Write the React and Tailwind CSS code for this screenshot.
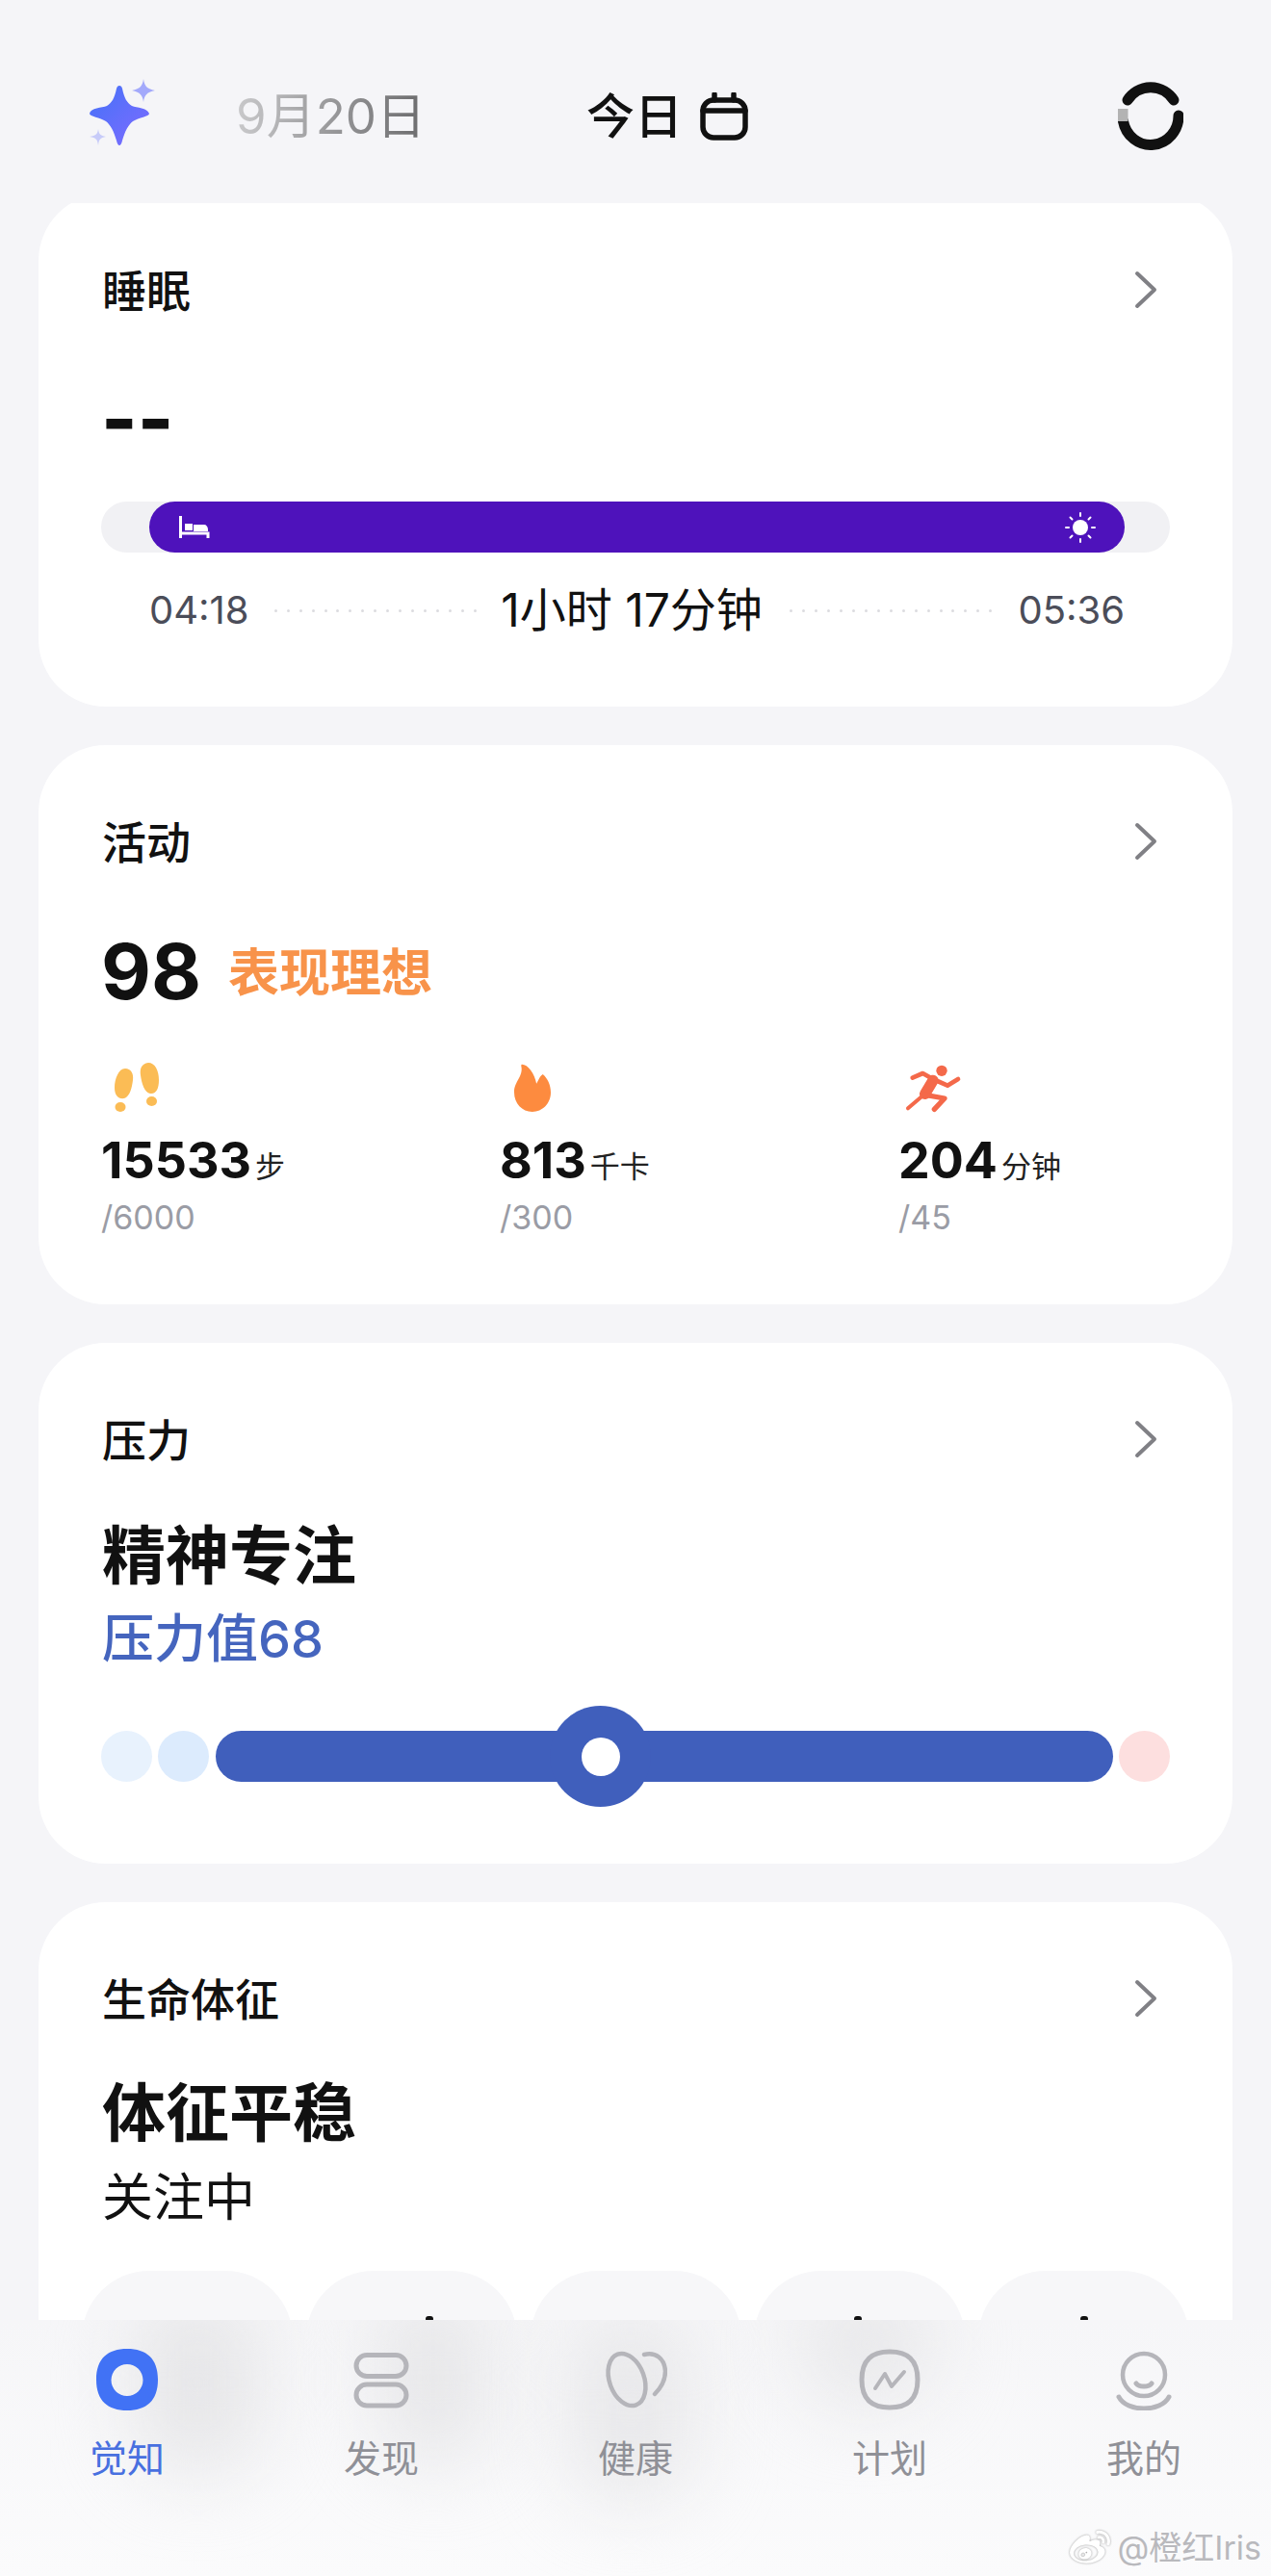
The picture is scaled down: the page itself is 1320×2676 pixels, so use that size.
import { FaWeibo } from "react-icons/fa";

const stats = [
  { value: "15533", unit: "步", goal: "/6000", icon: Footprints },
  { value: "813", unit: "千卡", goal: "/300", icon: Flame },
  { value: "204", unit: "分钟", goal: "/45", icon: Runner },
];

const tabs = [
  { label: "觉知", icon: TabAware, active: true },
  { label: "发现", icon: TabDiscover },
  { label: "健康", icon: TabHealth },
  { label: "计划", icon: TabPlan },
  { label: "我的", icon: TabMine },
];

// black tips of the chip contents that stick out above the tab bar
const chipTips = [null, "left-[124px]", null, "left-[104px]", "left-[106px]"];

function Sparkles() {
  return (
    <svg width="70" height="70" viewBox="0 0 70 70" className="shrink-0">
      <defs>
        <linearGradient id="star" x1="0" y1="0" x2="1" y2="1">
          <stop offset="0" stopColor="#4472f8" />
          <stop offset="1" stopColor="#7f6bff" />
        </linearGradient>
      </defs>
      <path d="M32 7 C33.500 7 34.500 8 35 10 C37 20 40 25 45 28 C50 30 61 30 63 36 C63 39 52 40 46 44 C41 48 38 54 35 64 C34.500 67 33 69 32 69 C31 69 29.500 67 29 64 C26 54 23 48 18 44 C12 40 1 39 1 36 C2 30 14 30 19 28 C24 25 27 20 29 10 C29.500 8 30.500 7 32 7Z" fill="url(#star)" />
      <path d="M57 0 C58 7 60 10 69 12 C60 14 58 17 57 24 C56 17 54 14 45 12 C54 10 56 7 57 0Z" fill="#a3a9fb" />
      <path d="M10 52 C10.700 57 12 59 18 60 C12 61 10.700 63 10 69 C9.300 63 8 61 1 60 C8 59 9.300 57 10 52Z" fill="#c7cbf9" />
    </svg>
  );
}

function CalendarIcon() {
  return (
    <svg width="50" height="50" viewBox="0 0 50 50" fill="none" stroke="#111" strokeWidth="5.500" strokeLinecap="round">
      <rect x="3" y="8" width="44" height="39" rx="11" />
      <path d="M3 19H47M15 2V8M35 2V8" />
    </svg>
  );
}

function RingIcon() {
  return (
    <svg width="68" height="72" viewBox="0 0 68 72" fill="none" strokeWidth="11">
      <path d="M10 20 A29 30 0 0 1 58 20" stroke="#111" strokeLinecap="round" />
      <path d="M63 36 A29 30 0 0 1 5.500 42" stroke="#111" strokeLinecap="round" />
      <path d="M5 29V42" stroke="#b3b3b3" />
    </svg>
  );
}

function Chevron() {
  return (
    <svg width="26" height="40" viewBox="0 0 26 40" fill="none" stroke="#808085" strokeWidth="4" strokeLinecap="round" strokeLinejoin="round" className="-mt-[3px]">
      <path d="M4 3L22 20L4 37" />
    </svg>
  );
}

function BedIcon() {
  return (
    <svg width="32" height="23" viewBox="0 0 32 23" fill="none" className="shrink-0">
      <path d="M1.500 0V23M1.500 18H30V23" stroke="#fff" strokeWidth="3" />
      <rect x="6" y="8" width="8" height="7" fill="#fff" />
      <path d="M15 9H26C28 9 30 11 30 14V16H15Z" fill="#fff" />
    </svg>
  );
}

function SunIcon() {
  return (
    <svg width="32" height="32" viewBox="0 0 32 32" fill="none" stroke="#fff" strokeWidth="2" strokeLinecap="round" className="shrink-0">
      <circle cx="16" cy="16" r="8" fill="#fff" stroke="none" />
      <path d="M16 1V4M16 28V31M1 16H4M28 16H31M5.500 5.500L7.500 7.500M24.500 24.500L26.500 26.500M5.500 26.500L7.500 24.500M24.500 7.500L26.500 5.500" />
    </svg>
  );
}

function Footprints() {
  return (
    <svg width="50" height="52" viewBox="0 0 50 52" fill="#fbbc55" className="ml-[13px]">
      <path d="M12 6 C18 6 21 11 20 18 C19 26 17 35 11 37 C5 38 1 34 1 26 C1 17 5 6 12 6Z" />
      <ellipse cx="7" cy="46" rx="5.500" ry="5" />
      <path d="M36 0 C29 1 27 6 28 13 C29 21 32 31 38 32 C44 33 47 27 47 18 C47 8 43 0 36 0Z" />
      <ellipse cx="39.500" cy="40" rx="5.500" ry="5" />
    </svg>
  );
}

function Flame() {
  return (
    <svg width="38" height="50" viewBox="78 45 115 151" fill="#fd8b3f" className="ml-[15px]">
      <path d="M103 47 C120 47 143 75 148 108 C155 95 160 82 168 78 C182 90 193 110 193 135 C193 170 167 196 135 196 C103 196 78 170 78 135 C78 100 108 85 100 52 C100 48 101 47 103 47Z" />
    </svg>
  );
}

function Runner() {
  return (
    <svg width="60" height="52" viewBox="60 45 180 156" fill="none" stroke="#f4694a" strokeLinecap="round" strokeLinejoin="round" className="ml-[6px]">
      <circle cx="177" cy="70" r="17" fill="#f4694a" stroke="none" />
      <path d="M86 92L118 78L150 96L195 116L228 96" strokeWidth="14" />
      <path d="M150 100L125 142" strokeWidth="34" />
      <path d="M125 142L72 187" strokeWidth="12" />
      <path d="M125 145L186 156L154 190" strokeWidth="16" />
    </svg>
  );
}

function TabAware() {
  return (
    <svg width="64" height="64" viewBox="0 0 64 64">
      <path fillRule="evenodd" fill="#4172f5" d="M32 0 C52 0 64 10 64 32 C64 54 52 64 32 64 C12 64 0 54 0 32 C0 10 12 0 32 0Z M32 16 A16.500 16.500 0 1 0 32 49 A16.500 16.500 0 1 0 32 16Z" />
    </svg>
  );
}

function TabDiscover() {
  return (
    <svg width="64" height="64" viewBox="0 0 64 64" fill="none" stroke="#b5b5ba" strokeWidth="5">
      <rect x="6" y="6.500" width="52" height="22" rx="11" />
      <rect x="6" y="37" width="52" height="22" rx="11" />
    </svg>
  );
}

function TabHealth() {
  return (
    <svg width="66" height="64" viewBox="0 0 66 64" fill="none" stroke="#b5b5ba" strokeWidth="4.500" strokeLinecap="round">
      <ellipse cx="24" cy="32" rx="18" ry="28" transform="rotate(-20 24 32)" />
      <path d="M42 6 C54 3 63 10 64 23 C64 32 60 40 53 47" />
    </svg>
  );
}

function TabPlan() {
  return (
    <svg width="64" height="64" viewBox="0 0 64 64" fill="none" stroke="#b5b5ba" strokeLinecap="round" strokeLinejoin="round">
      <path d="M32 3 C50 3 61 11 61 32 C61 53 50 61 32 61 C14 61 3 53 3 32 C3 11 14 3 32 3Z" strokeWidth="5" />
      <path d="M17 41L27 26L34 39L47 24" strokeWidth="4" />
    </svg>
  );
}

function TabMine() {
  return (
    <svg width="64" height="64" viewBox="0 0 64 64" fill="none" stroke="#b5b5ba" strokeLinecap="round">
      <circle cx="32" cy="27" r="22" strokeWidth="4.500" />
      <path d="M24 36 C27 40 37 40 40 36" strokeWidth="5" />
      <path d="M6 50 C14 66 50 66 58 50" strokeWidth="5" />
    </svg>
  );
}

function CardTitle({ children }) {
  return (
    <div className="flex h-[60px] items-center justify-between pl-[1px] pr-[12px]">
      <span className="text-[46px] font-medium leading-none text-[#111]">{children}</span>
      <Chevron />
    </div>
  );
}

function Dots() {
  return (
    <div className="flex flex-1 justify-between px-[3px]">
      {Array.from({ length: 17 }).map((_, i) => (
        <span key={i} className="h-[3px] w-[3px] rounded-full bg-[#dcdce0]" />
      ))}
    </div>
  );
}

export default function App() {
  return (
    <div className="relative flex h-[2676px] w-[1320px] flex-col overflow-hidden bg-[#f5f5f8] font-[family-name:Inter,'Noto_Sans_CJK_SC',sans-serif]">
      {/* Header */}
      <header className="relative z-10 flex h-[211px] shrink-0 items-start bg-[#f5f5f8] pt-[82px]">
        <div className="ml-[92px] w-[153px]">
          <Sparkles />
        </div>
        <div className="mt-[9px] w-[364px]">
          <span className="bg-gradient-to-r from-[#c9c9cb] to-[#6b6b6d] bg-clip-text text-[51px] leading-[60px] text-transparent">9月20日</span>
        </div>
        <div className="mt-[9px] flex items-center gap-[18px] text-[50px] font-medium leading-[60px] text-[#111]">
          今日
          <CalendarIcon />
        </div>
        <div className="ml-auto mr-[91px] mt-[2px]">
          <RingIcon />
        </div>
      </header>

      {/* Cards */}
      <main className="flex min-h-0 flex-1 flex-col gap-[40px] overflow-hidden px-[40px]">
        <section className="-mt-[10px] h-[533px] shrink-0 rounded-[70px] bg-white px-[65px] pt-[71px]">
          <CardTitle>睡眠</CardTitle>
          <div className="flex h-[189px] items-start pt-[58px]">
            <span className="text-[80px] font-extrabold leading-[90px] text-[#111]">--</span>
          </div>
          <div className="flex h-[53px] rounded-full bg-[#f1f1f4] pl-[50px] pr-[47px]">
            <div className="flex flex-1 items-center justify-between rounded-full bg-[#4e12bb] pl-[31px] pr-[30px]">
              <BedIcon />
              <SunIcon />
            </div>
          </div>
          <div className="mt-[30px] flex h-[60px] items-center pl-[50px] pr-[47px]">
            <span className="text-[40px] leading-none text-[#4b4d59]">04:18</span>
            <div className="ml-[23px] mr-[22px] flex-1"><Dots /></div>
            <span className="text-[48px] font-normal leading-none text-[#111]">1小时 17分钟</span>
            <div className="ml-[25px] mr-[24px] flex-1"><Dots /></div>
            <span className="text-[40px] leading-none text-[#4b4d59]">05:36</span>
          </div>
        </section>

        <section className="h-[581px] shrink-0 rounded-[70px] bg-white px-[65px] pt-[71px]">
          <CardTitle>活动</CardTitle>
          <div className="mt-[59px] flex h-[90px] items-center">
            <span className="text-[80px] font-bold leading-none text-[#111]">98</span>
            <span className="ml-[28px] mt-[5px] text-[53px] font-bold leading-none text-[#f8934a]">表现理想</span>
          </div>
          <div className="mt-[50px] flex">
            {stats.map((s) => {
              const Icon = s.icon;
              return (
                <div key={s.value} className="w-[414px] shrink-0">
                  <div className="flex h-[52px] items-center">
                    <Icon />
                  </div>
                  <div className="mt-[20px] flex h-[60px] items-center">
                    <span className="text-[52px] font-bold leading-none text-[#111]">{s.value}</span>
                    <span className="ml-[4px] mt-[10px] text-[31px] leading-none text-[#222]">{s.unit}</span>
                  </div>
                  <div className="mt-[9px] h-[40px] text-[34px] leading-[40px] text-[#9a9ca5]">{s.goal}</div>
                </div>
              );
            })}
          </div>
        </section>

        <section className="h-[541px] shrink-0 rounded-[70px] bg-white px-[65px] pt-[71px]">
          <CardTitle>压力</CardTitle>
          <div className="mt-[50px] h-[80px] pl-[1px] text-[66px] font-bold leading-[80px] text-[#111]">精神专注</div>
          <div className="mt-[15px] h-[64px] pl-[1px] text-[54px] font-medium leading-[64px] text-[#4565be]">压力值68</div>
          <div className="mt-[63px] flex h-[53px] items-stretch">
            <span className="w-[53px] rounded-full bg-[#e8f2fd]" />
            <span className="ml-[6px] w-[53px] rounded-full bg-[#dcebfd]" />
            <div className="relative ml-[7px] flex-1 rounded-full bg-[#405fbc]">
              <span className="absolute left-[347px] top-[-26px] flex h-[105px] w-[105px] items-center justify-center rounded-full bg-[#405fbc]">
                <span className="h-[40px] w-[40px] rounded-full bg-white" />
              </span>
            </div>
            <span className="ml-[6px] w-[53px] rounded-full bg-[#fddfdf]" />
          </div>
        </section>

        <section className="h-[600px] shrink-0 rounded-t-[70px] bg-white px-[65px] pt-[71px]">
          <CardTitle>生命体征</CardTitle>
          <div className="mt-[48px] h-[80px] pl-[1px] text-[66px] font-bold leading-[80px] text-[#111]">体征平稳</div>
          <div className="mt-[16px] h-[64px] pl-[1px] text-[53px] font-normal leading-[64px] text-[#111]">关注中</div>
          <div className="-mx-[20px] mt-[44px] flex justify-between">
            {chipTips.map((tip, i) => (
              <div key={i} className="relative h-[200px] w-[219px] rounded-[70px] bg-[#f7f7f9]">
                {tip && <span className={`absolute top-[47px] h-[6px] w-[8px] rounded-full bg-[#111] ${tip}`} />}
              </div>
            ))}
          </div>
        </section>
      </main>

      {/* Bottom tab bar */}
      <nav className="absolute bottom-0 left-0 z-20 h-[266px] w-full overflow-hidden bg-gradient-to-b from-[#f6f6f8] to-[#fbfbfc]">
        <span className="absolute left-[140px] top-[-30px] h-[190px] w-[130px] rounded-full bg-[#e6e6e8] blur-[40px]" />
        <span className="absolute left-[395px] top-[-30px] h-[180px] w-[110px] rounded-full bg-[#e6e6e8] blur-[40px]" />
        <span className="absolute left-[590px] top-[-10px] h-[200px] w-[130px] rounded-full bg-[#e8e8ea] blur-[40px]" />
        <span className="absolute left-[830px] top-[-40px] h-[130px] w-[140px] rounded-full bg-[#e8e8ea] blur-[40px]" />
        <div className="relative grid grid-cols-5 pt-[30px]">
          {tabs.map((t) => {
            const Icon = t.icon;
            return (
              <div key={t.label} className="flex flex-col items-center">
                <div className="flex h-[64px] items-center justify-center">
                  <Icon />
                </div>
                <span className={`mt-[25px] text-[39px] leading-[50px] ${t.active ? "text-[#4870e0]" : "text-[#8f9097]"}`}>
                  {t.label}
                </span>
              </div>
            );
          })}
        </div>
        <div className="absolute bottom-[8px] right-[10px] flex items-center gap-[6px] text-[34px] leading-[40px] text-[#b9b9bd] [text-shadow:0_0_2px_#fff]">
          <FaWeibo className="h-[42px] w-[46px] text-white drop-shadow-[0_0_1px_#999]" />
          <span>@橙红Iris</span>
        </div>
      </nav>
    </div>
  );
}
